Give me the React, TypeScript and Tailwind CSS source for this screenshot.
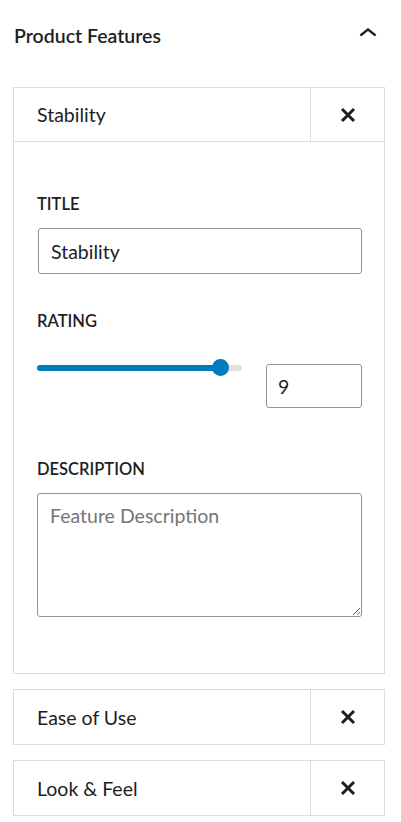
import React from "react";

const font = { fontFamily: "Lato, 'Liberation Sans', sans-serif" };

function CloseIcon() {
  return (
    <svg width="16" height="16" viewBox="0 0 16 16" aria-hidden="true">
      <path d="M2 2 L14 14 M14 2 L2 14" stroke="#1e1e1e" strokeWidth="3" fill="none" />
    </svg>
  );
}

function ItemHeader({ title, bottomBorder }: { title: string; bottomBorder?: boolean }) {
  return (
    <div className={`flex h-[54px] ${bottomBorder ? "border-b border-[#dcdcde]" : ""}`}>
      <div className="flex-1 flex items-center pl-[23px] text-[19.5px] leading-[27px] text-[#1e1e1e]">{title}</div>
      <div className="w-[74px] border-l border-[#dcdcde] flex items-center justify-center">
        <CloseIcon />
      </div>
    </div>
  );
}

function Label({ children }: { children: React.ReactNode }) {
  return (
    <div className="text-[16.5px] leading-[22px] font-semibold uppercase text-[#1e1e1e] mb-[13px]">{children}</div>
  );
}

export default function App() {
  return (
    <div className="w-[401px] min-h-[822px] bg-white text-[#1e1e1e]" style={font}>
      <div className="pt-[16px] pl-[14px] pr-[15px] flex justify-between items-start">
        <h2 className="mt-[6px] text-[19.5px] leading-[27px] font-semibold">Product Features</h2>
        <svg width="36" height="36" viewBox="0 0 24 24" aria-hidden="true">
          <path d="M6.5 12.4L12 8l5.5 4.4-.9 1.2L12 10l-4.6 3.6-1-1.2z" fill="#1e1e1e" />
        </svg>
      </div>

      <div className="mt-[35px] ml-[13px] w-[372px] flex flex-col gap-[15px]">
        <div className="border border-[#dcdcde]">
          <ItemHeader title="Stability" bottomBorder />
          <div className="pt-[51px] pl-[23px] pr-[21px] pb-[56px]">
            <Label>Title</Label>
            <input
              defaultValue="Stability"
              className="ml-[1px] w-[324px] h-[46px] border border-[#949494] rounded-[3px] px-[12px] text-[19.5px] text-[#1e1e1e] outline-none"
              style={font}
            />
            <div className="mt-[36px]">
              <Label>Rating</Label>
            </div>
            <div className="mt-[27px] flex items-start gap-[24px]">
              <div className="relative w-[205px] h-[17px]">
                <div className="absolute left-0 right-0 top-[6px] h-[6px] rounded-full bg-[#e0e0e0]" />
                <div className="absolute left-0 top-[6px] h-[6px] w-[184px] rounded-full bg-[#007cba]" />
                <div className="absolute left-[175px] top-0 w-[17px] h-[17px] rounded-full bg-[#007cba]" />
              </div>
              <input
                defaultValue="9"
                className="mt-[5px] w-[96px] h-[44px] border border-[#949494] rounded-[3px] px-[11px] text-[19.5px] text-[#1e1e1e] outline-none"
                style={font}
              />
            </div>
            <div className="mt-[50px]">
              <Label>Description</Label>
            </div>
            <textarea
              placeholder="Feature Description"
              className="block w-[325px] h-[124px] border border-[#949494] rounded-[3px] px-[12px] pt-[8px] text-[19.5px] leading-[27px] text-[#1e1e1e] placeholder:text-[#757575] outline-none"
              style={font}
            />
          </div>
        </div>
        <div className="border border-[#dcdcde]">
          <ItemHeader title="Ease of Use" />
        </div>
        <div className="border border-[#dcdcde]">
          <ItemHeader title="Look & Feel" />
        </div>
      </div>
    </div>
  );
}
